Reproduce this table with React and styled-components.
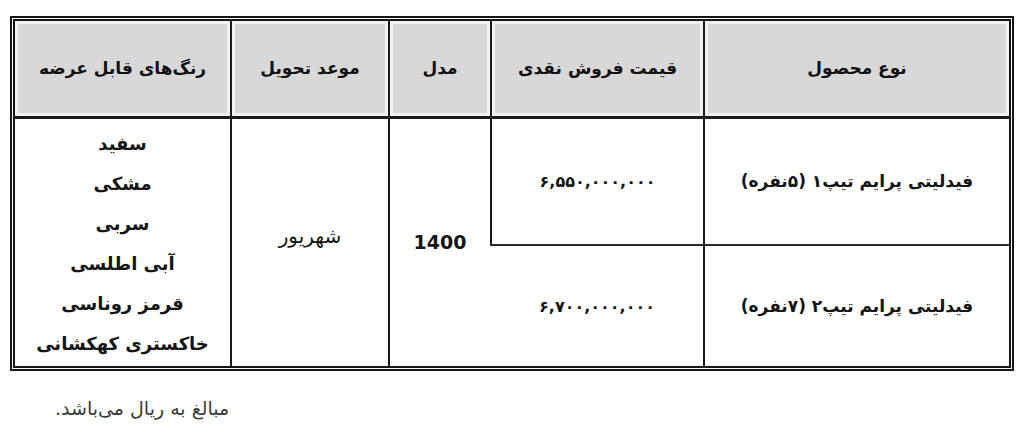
import React from 'react'
import styled, { createGlobalStyle } from 'styled-components'

const GlobalStyle = createGlobalStyle`
  html, body {
    margin: 0;
    background: #ffffff;
  }
  body {
    font-family: "DejaVu Sans", "Noto Sans", sans-serif;
    color: #111;
  }
`

const Page = styled.div`
  width: 1024px;
  height: 436px;
  padding: 16px 10px 0 10px;
  box-sizing: border-box;
  display: flex;
  flex-direction: column;
`

const Frame = styled.div`
  width: 1004px;
  box-sizing: border-box;
  border: 5px double #151515;
`

const Table = styled.table`
  width: 994px;
  table-layout: fixed;
  border-collapse: collapse;
  direction: rtl;
`

const HeadRow = styled.tr`
  height: 96px;
`

const BodyRow = styled.tr`
  height: ${p => p.h}px;
`

const HeadCell = styled.th`
  width: ${p => (p.w ? `${p.w}px` : 'auto')};
  background: #d8d8d8;
  box-shadow: inset 0 0 0 3px #f2f2f2;
  border-left: 2px solid #1a1a1a;
  border-bottom: 3px solid #1a1a1a;
  font-size: 17px;
  font-weight: bold;
  text-align: center;
  vertical-align: middle;
  padding: 0;
  &:last-child {
    border-left: none;
  }
`

const Cell = styled.td`
  border-left: 2px solid #1a1a1a;
  border-bottom: ${p => (p.divider ? '2px solid #2a2a2a' : 'none')};
  text-align: center;
  vertical-align: middle;
  padding: 0;
  font-size: ${p => p.size || 17}px;
  font-weight: ${p => (p.light ? 'normal' : 'bold')};
  color: #151515;
  &:last-child {
    border-left: none;
  }
`

const Price = styled.span`
  font-size: 16px;
  font-weight: bold;
  letter-spacing: 0.5px;
`

const Month = styled.span`
  position: relative;
  top: -6px;
`

const ColorList = styled.div`
  display: flex;
  flex-direction: column;
  align-items: center;
  padding-top: 4px;
  > span {
    line-height: 40px;
    font-size: 18px;
    font-weight: bold;
  }
`

const Footer = styled.div`
  margin-top: 26px;
  padding-left: 45px;
  font-size: 19px;
  color: #3a3a3a;
  direction: rtl;
  text-align: left;
  > span {
    display: inline-block;
  }
`

const cols = [
  { label: 'نوع محصول', w: 304 },
  { label: 'قیمت فروش نقدی', w: 211 },
  { label: 'مدل', w: 100 },
  { label: 'موعد تحویل', w: 156 },
  { label: 'رنگ‌های قابل عرضه' },
]

const colors = ['سفید', 'مشکی', 'سربی', 'آبی اطلسی', 'قرمز روناسی', 'خاکستری کهکشانی']

export default function App() {
  return (
    <>
      <GlobalStyle />
      <Page>
        <Frame>
          <Table>
            <thead>
              <HeadRow>
                {cols.map(c => (
                  <HeadCell key={c.label} w={c.w}>{c.label}</HeadCell>
                ))}
              </HeadRow>
            </thead>
            <tbody>
              <BodyRow h={128}>
                <Cell divider>فیدلیتی پرایم تیپ۱ (۵نفره)</Cell>
                <Cell divider><Price>۶,۵۵۰,۰۰۰,۰۰۰</Price></Cell>
                <Cell rowSpan={2} size={19}>1400</Cell>
                <Cell rowSpan={2} size={20} light>
                  <Month>شهریور</Month>
                </Cell>
                <Cell rowSpan={2}>
                  <ColorList>
                    {colors.map(c => <span key={c}>{c}</span>)}
                  </ColorList>
                </Cell>
              </BodyRow>
              <BodyRow h={121}>
                <Cell>فیدلیتی پرایم تیپ۲ (۷نفره)</Cell>
                <Cell><Price>۶,۷۰۰,۰۰۰,۰۰۰</Price></Cell>
              </BodyRow>
            </tbody>
          </Table>
        </Frame>
        <Footer><span>مبالغ به ریال می‌باشد.</span></Footer>
      </Page>
    </>
  )
}
